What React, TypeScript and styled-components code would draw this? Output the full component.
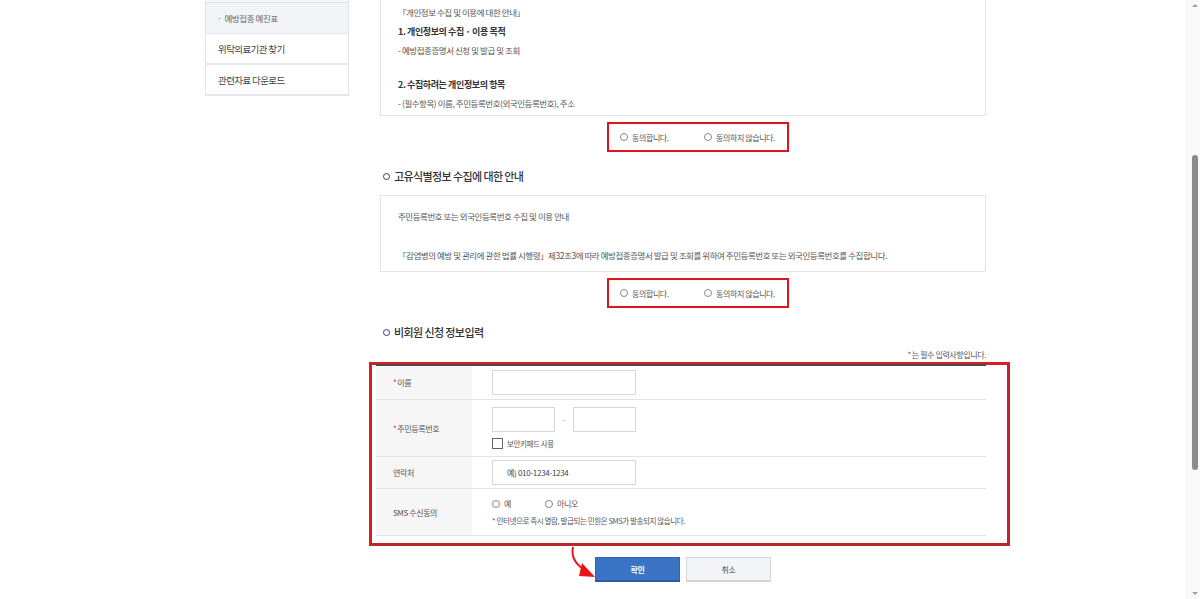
import React from 'react';
import styled, { createGlobalStyle } from 'styled-components';

const GlobalStyle = createGlobalStyle`
  html, body {
    margin: 0;
    padding: 0;
    background: #fff;
    overflow: hidden;
  }
  body {
    font-family: "Noto Sans CJK KR", "Noto Sans", sans-serif;
    color: #333;
  }
  * { box-sizing: border-box; }
`;

const Page = styled.div`
  display: flex;
  align-items: flex-start;
  width: 1200px;
  height: 599px;
  padding-left: 205px;
  gap: 31px;
`;

const Side = styled.nav`
  width: 144px;
  display: flex;
  flex-direction: column;
  border-left: 1px solid #e2e4e8;
  border-right: 1px solid #e2e4e8;
`;

const SideTop = styled.div`
  height: 3px;
  background: #f6f9fc;
  border-bottom: 1px solid #dbe5f1;
`;

const SideSub = styled.div`
  height: 31px;
  display: flex;
  align-items: center;
  padding-left: 11px;
  background: #f3f4f7;
  color: #666;
  font-size: 8.5px;
  letter-spacing: -0.4px;
  border-bottom: 1px solid #e6e7ea;
`;

const SideItem = styled.div`
  height: 31px;
  display: flex;
  align-items: center;
  padding-left: 12px;
  color: #444;
  font-size: 9.5px;
  letter-spacing: -0.6px;
  border-bottom: 2px solid #e6e7ea;
`;

const Main = styled.main`
  width: 606px;
  display: flex;
  flex-direction: column;
`;

const NoticeBox = styled.div<{ $h: number; $top?: boolean }>`
  height: ${p => p.$h}px;
  border: 1px solid #e3e3e3;
  border-top: ${p => (p.$top ? '1px solid #e3e3e3' : 'none')};
  padding: 0 17px;
  overflow: hidden;
  font-size: 8.5px;
  letter-spacing: -0.4px;
  color: #555;
`;

const Line = styled.p<{ $bold?: boolean; $mt?: number }>`
  margin: ${p => p.$mt ?? 0}px 0 0;
  line-height: 19px;
  height: 19px;
  white-space: nowrap;
  font-weight: ${p => (p.$bold ? 700 : 400)};
  color: ${p => (p.$bold ? '#333' : '#555')};
  font-size: ${p => (p.$bold ? '9px' : '8.5px')};
  letter-spacing: ${p => (p.$bold ? '-0.4px' : '-0.45px')};
`;

const AgreeFrame = styled.div<{ $mt: number }>`
  margin: ${p => p.$mt}px 0 0 227px;
  width: 182px;
  height: 30px;
  border: 2px solid #e0141e;
  display: flex;
  align-items: center;
  padding-left: 11px;
`;

const RadioLabel = styled.label<{ $w?: number }>`
  display: flex;
  align-items: center;
  gap: 4px;
  width: ${p => (p.$w ? `${p.$w}px` : 'auto')};
  font-size: 8px;
  letter-spacing: -0.4px;
  color: #555;
  white-space: nowrap;
`;

const Ring = styled.span`
  width: 8px;
  height: 8px;
  border-radius: 50%;
  border: 1px solid #888;
  background: #fff;
  flex: none;
`;

const Heading = styled.h3<{ $mt: number; $mb?: number }>`
  margin: ${p => p.$mt}px 0 ${p => p.$mb ?? 0}px 3px;
  height: 18px;
  display: flex;
  align-items: center;
  gap: 4px;
  font-size: 11px;
  font-weight: 500;
  letter-spacing: -0.6px;
  color: #333;
`;

const Bullet = styled.span`
  width: 7px;
  height: 7px;
  border-radius: 50%;
  border: 1.5px solid #2e3a87;
`;

const RequiredNote = styled.div`
  margin-top: 9px;
  text-align: right;
  font-size: 8px;
  letter-spacing: -0.4px;
  color: #555;
  line-height: 10px;
`;

const Star = styled.span`
  color: #d1213a;
  margin-right: 1px;
`;

const FormFrame = styled.div`
  margin: 2px -24px 0 -11px;
  border: 3px solid #d81e24;
  border-bottom-color: #b8262a;
  border-right-color: #c62228;
  padding: 0 21px 7px 4px;
`;

const Table = styled.div`
  border-top: 2px solid #4a4a4a;
  border-bottom: 1px solid #e3e3e3;
  margin-top: -1px;
`;

const Row = styled.div<{ $h: number }>`
  display: grid;
  grid-template-columns: 96px 1fr;
  height: ${p => p.$h}px;
  & + & {
    border-top: 1px solid #e3e3e3;
  }
`;

const Th = styled.div`
  background: #f6f6f6;
  display: flex;
  align-items: center;
  padding-left: 17px;
  font-size: 8px;
  letter-spacing: -0.4px;
  color: #555;
`;

const Td = styled.div`
  display: flex;
  flex-direction: column;
  justify-content: center;
  gap: 6px;
  padding-left: 20px;
`;

const Inline = styled.div`
  display: flex;
  align-items: center;
`;

const Input = styled.div<{ $w: number }>`
  width: ${p => p.$w}px;
  height: 25px;
  border: 1px solid #d8d8d8;
  background: #fff;
  display: flex;
  align-items: center;
  padding-left: 14px;
  font-size: 8px;
  letter-spacing: -0.3px;
  color: #444;
`;

const Dash = styled.span`
  width: 18px;
  text-align: center;
  font-size: 8px;
  color: #888;
`;

const Check = styled.span`
  width: 11px;
  height: 11px;
  border: 1px solid #666;
  background: #fff;
  flex: none;
  margin-right: 4px;
`;

const SmallText = styled.span`
  font-size: 7.5px;
  letter-spacing: -0.4px;
  color: #555;
  white-space: nowrap;
`;

const Buttons = styled.div`
  position: relative;
  margin: 11px 0 0 215px;
  display: flex;
  gap: 6px;
`;

const Btn = styled.button<{ $primary?: boolean }>`
  width: 85px;
  height: 25px;
  border: 1px solid ${p => (p.$primary ? '#2f66b5' : '#d4d6da')};
  border-bottom: 2px solid ${p => (p.$primary ? '#2a5ba3' : '#d4d6da')};
  background: ${p => (p.$primary ? '#3b74c4' : '#f3f4f6')};
  color: ${p => (p.$primary ? '#fff' : '#444')};
  font-family: inherit;
  font-size: 8px;
  font-weight: ${p => (p.$primary ? 700 : 400)};
  letter-spacing: -0.3px;
  padding: 0;
`;

const Arrow = styled.svg`
  position: absolute;
  left: -24px;
  top: -10px;
  width: 26px;
  height: 34px;
  overflow: visible;
`;

const ScrollTrack = styled.div`
  position: fixed;
  top: 0;
  right: 0;
  width: 15px;
  height: 599px;
  background: #fafafa;
`;

const ScrollThumb = styled.div`
  position: absolute;
  left: 7px;
  top: 155px;
  width: 6px;
  height: 315px;
  border-radius: 3px;
  background: #8c8c8c;
`;

const ScrollArrow = styled.span<{ $down?: boolean }>`
  position: absolute;
  left: 7px;
  ${p => (p.$down ? 'bottom: 4px;' : 'top: 4px;')}
  width: 0;
  height: 0;
  border-left: 3px solid transparent;
  border-right: 3px solid transparent;
  ${p => (p.$down ? 'border-top: 3px solid #a0a0a0;' : 'border-bottom: 3px solid #a0a0a0;')}
`;

const Agree = ({ mt }: { mt: number }) => (
  <AgreeFrame $mt={mt}>
    <RadioLabel $w={84}>
      <Ring />
      동의합니다.
    </RadioLabel>
    <RadioLabel>
      <Ring />
      동의하지 않습니다.
    </RadioLabel>
  </AgreeFrame>
);

export default function App() {
  return (
    <>
      <GlobalStyle />
      <Page>
        <Side>
          <SideTop />
          <SideSub>· &nbsp;예방접종 예진표</SideSub>
          <SideItem>위탁의료기관 찾기</SideItem>
          <SideItem>관련자료 다운로드</SideItem>
        </Side>

        <Main>
          <NoticeBox $h={116}>
            <Line $mt={3}>「개인정보 수집 및 이용에 대한 안내」</Line>
            <Line $bold>1. 개인정보의 수집 · 이용 목적</Line>
            <Line>- 예방접종증명서 신청 및 발급 및 조회</Line>
            <Line $bold $mt={15}>2. 수집하려는 개인정보의 항목</Line>
            <Line>- (필수항목) 이름, 주민등록번호(외국인등록번호), 주소</Line>
          </NoticeBox>
          <Agree mt={6} />

          <Heading $mt={15} $mb={10}>
            <Bullet />
            고유식별정보 수집에 대한 안내
          </Heading>
          <NoticeBox $h={77} $top>
            <Line $mt={11}>주민등록번호 또는 외국인등록번호 수집 및 이용 안내</Line>
            <Line $mt={20}>
              「감염병의 예방 및 관리에 관한 법률 시행령」제32조3에 따라 예방접종증명서 발급 및 조회를 위하여 주민등록번호 또는 외국인등록번호를 수집합니다.
            </Line>
          </NoticeBox>
          <Agree mt={6} />

          <Heading $mt={15}>
            <Bullet />
            비회원 신청 정보입력
          </Heading>
          <RequiredNote>
            <Star>*</Star>는 필수 입력사항입니다.
          </RequiredNote>

          <FormFrame>
            <Table>
              <Row $h={33}>
                <Th>
                  <Star>*</Star>이름
                </Th>
                <Td>
                  <Input $w={144} />
                </Td>
              </Row>
              <Row $h={57}>
                <Th>
                  <Star>*</Star>주민등록번호
                </Th>
                <Td>
                  <Inline>
                    <Input $w={63} />
                    <Dash>-</Dash>
                    <Input $w={63} />
                  </Inline>
                  <Inline>
                    <Check />
                    <SmallText>보안키패드 사용</SmallText>
                  </Inline>
                </Td>
              </Row>
              <Row $h={32}>
                <Th>연락처</Th>
                <Td>
                  <Input $w={144}>예) 010-1234-1234</Input>
                </Td>
              </Row>
              <Row $h={47}>
                <Th>SMS 수신동의</Th>
                <Td>
                  <Inline>
                    <RadioLabel $w={53}>
                      <Ring />
                      예
                    </RadioLabel>
                    <RadioLabel>
                      <Ring />
                      아니오
                    </RadioLabel>
                  </Inline>
                  <SmallText>* 인터넷으로 즉시 열람, 발급되는 민원은 SMS가 발송되지 않습니다.</SmallText>
                </Td>
              </Row>
            </Table>
          </FormFrame>

          <Buttons>
            <Arrow viewBox="0 0 26 34">
              <path d="M2 0 C0 10 4 18 16 24" fill="none" stroke="#e8141a" strokeWidth="2" />
              <path d="M11 16 L24 30 L8 29 Z" fill="#e8141a" />
            </Arrow>
            <Btn $primary>확인</Btn>
            <Btn>취소</Btn>
          </Buttons>
        </Main>
      </Page>
      <ScrollTrack>
        <ScrollArrow />
        <ScrollThumb />
        <ScrollArrow $down />
      </ScrollTrack>
    </>
  );
}
